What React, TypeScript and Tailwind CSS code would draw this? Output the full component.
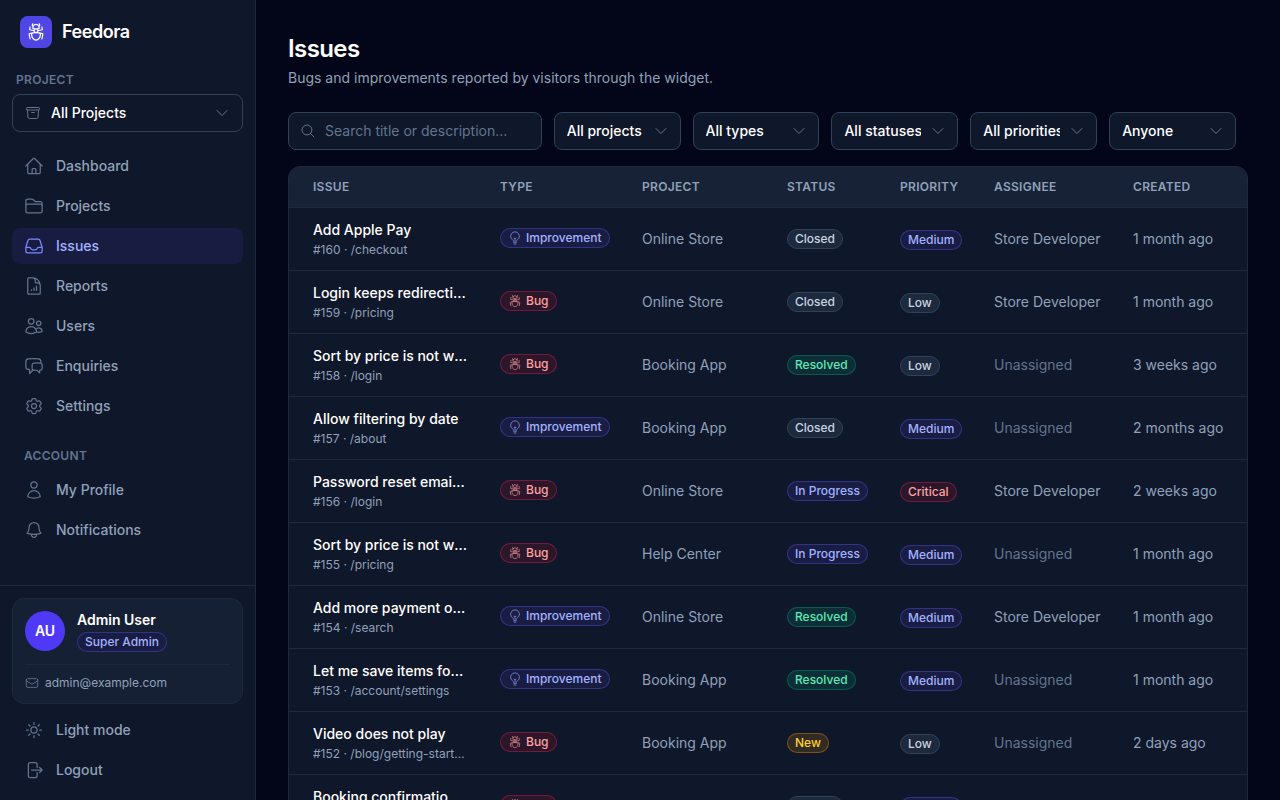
import type { ComponentType } from "react";
import {
  HiOutlineArchiveBox,
  HiOutlineArrowRightOnRectangle,
  HiOutlineBell,
  HiOutlineBugAnt,
  HiOutlineChatBubbleLeftRight,
  HiOutlineChevronDown,
  HiOutlineCog6Tooth,
  HiOutlineDocumentChartBar,
  HiOutlineEnvelope,
  HiOutlineFolder,
  HiOutlineHome,
  HiOutlineInbox,
  HiOutlineLightBulb,
  HiOutlineMagnifyingGlass,
  HiOutlineSun,
  HiOutlineUser,
  HiOutlineUsers,
} from "react-icons/hi2";

type Icon = ComponentType<{ className?: string }>;

const mainNav: { label: string; icon: Icon; active?: boolean }[] = [
  { label: "Dashboard", icon: HiOutlineHome },
  { label: "Projects", icon: HiOutlineFolder },
  { label: "Issues", icon: HiOutlineInbox, active: true },
  { label: "Reports", icon: HiOutlineDocumentChartBar },
  { label: "Users", icon: HiOutlineUsers },
  { label: "Enquiries", icon: HiOutlineChatBubbleLeftRight },
  { label: "Settings", icon: HiOutlineCog6Tooth },
];

const filters = [
  { name: "Project", value: "All projects" },
  { name: "Type", value: "All types" },
  { name: "Status", value: "All statuses" },
  { name: "Priority", value: "All priorities" },
  { name: "Assignee", value: "Anyone" },
];

const tones = {
  indigo: "bg-[#191c43] text-indigo-300 border-indigo-500/35",
  red: "bg-[#2b162a] text-red-300 border-rose-500/35",
  green: "bg-emerald-500/15 text-emerald-300 border-emerald-500/30",
  amber: "bg-amber-500/15 text-amber-300 border-amber-500/35",
  gray: "bg-slate-800 text-slate-300 border-slate-700",
};

const statusTone: Record<string, keyof typeof tones> = {
  Closed: "gray",
  Resolved: "green",
  "In Progress": "indigo",
  New: "amber",
};

const priorityTone: Record<string, keyof typeof tones> = {
  Low: "gray",
  Medium: "indigo",
  Critical: "red",
};

const issues = [
  [160, "Add Apple Pay", "/checkout", "Improvement", "Online Store", "Closed", "Medium", "Store Developer", "1 month ago"],
  [159, "Login keeps redirecting back", "/pricing", "Bug", "Online Store", "Closed", "Low", "Store Developer", "1 month ago"],
  [158, "Sort by price is not working", "/login", "Bug", "Booking App", "Resolved", "Low", "", "3 weeks ago"],
  [157, "Allow filtering by date", "/about", "Improvement", "Booking App", "Closed", "Medium", "", "2 months ago"],
  [156, "Password reset email missing", "/login", "Bug", "Online Store", "In Progress", "Critical", "Store Developer", "2 weeks ago"],
  [155, "Sort by price is not working", "/pricing", "Bug", "Help Center", "In Progress", "Medium", "", "1 month ago"],
  [154, "Add more payment options", "/search", "Improvement", "Online Store", "Resolved", "Medium", "Store Developer", "1 month ago"],
  [153, "Let me save items for later", "/account/settings", "Improvement", "Booking App", "Resolved", "Medium", "", "1 month ago"],
  [152, "Video does not play", "/blog/getting-started", "Bug", "Booking App", "New", "Low", "", "2 days ago"],
  [151, "Booking confirmation not sent", "/checkout", "Bug", "Booking App", "Closed", "Medium", "", "1 month ago"],
] as const;

function Badge({ text, tone, icon: IconGlyph }: { text: string; tone: keyof typeof tones; icon?: Icon }) {
  return (
    <span
      className={`inline-flex h-5 items-center gap-1 rounded-full border px-[7px] text-xs font-medium whitespace-nowrap ${tones[tone]}`}
    >
      {IconGlyph && <IconGlyph className="size-3.5 opacity-70" />}
      {text}
    </span>
  );
}

function NavLink({ label, icon: IconGlyph, active }: { label: string; icon: Icon; active?: boolean }) {
  return (
    <a
      href="#"
      aria-current={active ? "page" : undefined}
      className={`flex h-9 items-center gap-3 rounded-lg px-3 text-sm font-medium ${
        active ? "bg-[#181c40] text-indigo-300" : "text-slate-400"
      }`}
    >
      <IconGlyph className={`size-5 ${active ? "text-indigo-400" : "text-slate-500"}`} />
      {label}
    </a>
  );
}

function Sidebar() {
  return (
    <aside className="sticky top-0 flex h-screen w-64 shrink-0 flex-col border-r border-slate-800 bg-slate-900">
      <div className="flex h-16 items-center gap-2.5 px-5">
        <span className="flex size-8 items-center justify-center rounded-lg bg-[#4f46e5] text-white">
          <HiOutlineBugAnt className="size-5" />
        </span>
        <span className="text-lg font-semibold tracking-tight text-white">Feedora</span>
      </div>

      <div className="px-3 pt-2">
        <label htmlFor="current-project" className="block px-1 pb-1.5 text-xs font-semibold tracking-wide text-slate-500">
          PROJECT
        </label>
        <div className="relative">
          <HiOutlineArchiveBox className="pointer-events-none absolute top-1/2 left-[13px] size-4 -translate-y-1/2 text-slate-500" />
          <select
            id="current-project"
            className="block h-[38px] w-full appearance-none rounded-lg border border-slate-700 bg-slate-900 pr-9 pl-[38px] text-sm font-medium text-white"
          >
            <option>All Projects</option>
          </select>
          <HiOutlineChevronDown className="pointer-events-none absolute top-1/2 right-[13px] size-4 -translate-y-1/2 text-slate-500" />
        </div>
      </div>

      <nav className="flex min-h-0 flex-1 flex-col gap-1 px-3 pt-4">
        {mainNav.map((item) => (
          <NavLink key={item.label} {...item} />
        ))}
        <p className="px-3 pt-5 text-xs font-semibold tracking-wide text-slate-500">ACCOUNT</p>
        <div className="flex flex-col gap-1 pt-1">
          <NavLink label="My Profile" icon={HiOutlineUser} />
          <NavLink label="Notifications" icon={HiOutlineBell} />
        </div>
      </nav>

      <div className="border-t border-slate-800 p-3">
        <div className="rounded-xl border border-slate-800 bg-slate-800/50 p-3">
          <div className="flex items-start gap-3">
            <span className="flex size-10 items-center justify-center rounded-full bg-[#4f39f6] text-sm font-semibold text-white">
              AU
            </span>
            <div className="flex flex-col items-start gap-[3px]">
              <span className="text-sm leading-[18px] font-semibold text-white">Admin User</span>
              <Badge text="Super Admin" tone="indigo" />
            </div>
          </div>
          <div className="mt-3 flex items-center gap-1.5 border-t border-slate-800 pt-2.5 text-xs text-slate-400">
            <HiOutlineEnvelope className="size-3.5 text-slate-500" />
            admin@example.com
          </div>
        </div>
        <div className="mt-2 flex flex-col gap-1">
          <button type="button" className="flex h-9 items-center gap-3 rounded-lg px-3 text-sm font-medium text-slate-400">
            <HiOutlineSun className="size-5 text-slate-500" />
            Light mode
          </button>
          <button type="button" className="flex h-9 items-center gap-3 rounded-lg px-3 text-sm font-medium text-slate-400">
            <HiOutlineArrowRightOnRectangle className="size-5 text-slate-500" />
            Logout
          </button>
        </div>
      </div>
    </aside>
  );
}

function Filters() {
  return (
    <div className="mt-6 grid grid-cols-[2fr_repeat(5,1fr)] gap-3 pr-3">
      <div className="relative">
        <HiOutlineMagnifyingGlass className="pointer-events-none absolute top-1/2 left-3 size-4 -translate-y-1/2 text-slate-500" />
        <input
          type="text"
          aria-label="Search issues"
          placeholder="Search title or description..."
          className="block w-full rounded-lg border border-slate-700 bg-slate-900 py-2 pr-3 pl-9 text-sm text-white placeholder:text-slate-500"
        />
      </div>
      {filters.map((filter) => (
        <div key={filter.name} className="relative">
          <select
            aria-label={filter.name}
            className="block h-[38px] w-full appearance-none rounded-lg border border-slate-700 bg-slate-900 pr-9 pl-3 text-sm font-medium text-white"
          >
            <option>{filter.value}</option>
          </select>
          <HiOutlineChevronDown className="pointer-events-none absolute top-1/2 right-3 size-4 -translate-y-1/2 text-slate-500" />
        </div>
      ))}
    </div>
  );
}

function IssueTable() {
  return (
    <div className="mt-4 overflow-hidden rounded-xl border border-slate-800 bg-slate-900">
      <table className="w-full table-fixed text-left text-sm whitespace-nowrap text-slate-400">
        <colgroup>
          <col className="w-[195px]" />
          <col className="w-[142px]" />
          <col className="w-[145px]" />
          <col className="w-[113px]" />
          <col className="w-[94px]" />
          <col className="w-[139px]" />
          <col />
        </colgroup>
        <thead className="bg-slate-800/60 text-xs tracking-wide">
          <tr className="border-b border-slate-800">
            <th className="py-3 pr-4 pl-6 font-semibold">ISSUE</th>
            <th className="px-4 py-3 font-semibold">TYPE</th>
            <th className="px-4 py-3 font-semibold">PROJECT</th>
            <th className="px-4 py-3 font-semibold">STATUS</th>
            <th className="px-4 py-3 font-semibold">PRIORITY</th>
            <th className="px-4 py-3 font-semibold">ASSIGNEE</th>
            <th className="py-3 pr-6 pl-4 font-semibold">CREATED</th>
          </tr>
        </thead>
        <tbody>
          {issues.map(([id, title, path, type, project, status, priority, assignee, created]) => (
            <tr key={id} className="border-b border-slate-800">
              <td className="py-3 pr-4 pl-6">
                <a href="#" className="block truncate font-medium text-white">
                  {title}
                </a>
                <p className="mt-0.5 truncate text-xs">
                  #{id} · {path}
                </p>
              </td>
              <td className="px-4 py-3">
                <Badge
                  text={type}
                  tone={type === "Bug" ? "red" : "indigo"}
                  icon={type === "Bug" ? HiOutlineBugAnt : HiOutlineLightBulb}
                />
              </td>
              <td className="px-4 py-3">{project}</td>
              <td className="px-4 py-3">
                <div className="flex items-center">
                  <Badge text={status} tone={statusTone[status]} />
                </div>
              </td>
              <td className="px-4 py-3">
                <Badge text={priority} tone={priorityTone[priority]} />
              </td>
              <td className={`px-4 py-3 ${assignee ? "" : "text-slate-500"}`}>{assignee || "Unassigned"}</td>
              <td className="py-3 pr-6 pl-4">{created}</td>
            </tr>
          ))}
        </tbody>
      </table>
    </div>
  );
}

export default function App() {
  return (
    <div className="flex min-h-screen bg-slate-950 font-['Inter',sans-serif]">
      <Sidebar />
      <main className="min-w-0 flex-1 p-8">
        <h1 className="text-2xl leading-[34px] font-semibold tracking-tight text-white">Issues</h1>
        <p className="mt-0.5 text-sm text-slate-400">Bugs and improvements reported by visitors through the widget.</p>
        <Filters />
        <IssueTable />
      </main>
    </div>
  );
}
